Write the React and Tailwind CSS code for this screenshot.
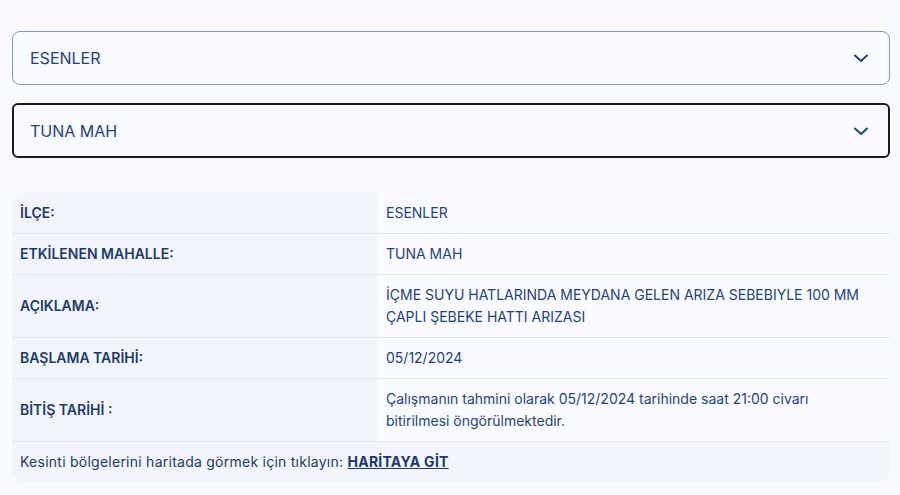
import { useState } from 'react'

const rows = [
  { label: 'İLÇE:', value: 'ESENLER' },
  { label: 'ETKİLENEN MAHALLE:', value: 'TUNA MAH' },
  { label: 'AÇIKLAMA:', value: 'İÇME SUYU HATLARINDA MEYDANA GELEN ARIZA SEBEBIYLE 100 MM ÇAPLI ŞEBEKE HATTI ARIZASI' },
  { label: 'BAŞLAMA TARİHİ:', value: '05/12/2024' },
  { label: 'BİTİŞ TARİHİ :', value: 'Çalışmanın tahmini olarak 05/12/2024 tarihinde saat 21:00 civarı bitirilmesi öngörülmektedir.' },
]

function Chevron() {
  return (
    <svg className="w-4 h-4 text-[#1e4285]" fill="none" viewBox="0 0 16 16" stroke="currentColor" strokeWidth={2}>
      <path strokeLinecap="round" strokeLinejoin="round" d="M2 5.5L8 11l6-5.5" />
    </svg>
  )
}

function Select({ value, active }) {
  return (
    <button
      type="button"
      className={
        active
          ? 'w-full h-[55px] flex items-center justify-between pl-4 pr-[19px] bg-[#f9fbfe] border-2 border-[#1b1b1b] rounded-md text-left'
          : 'w-full h-[54px] flex items-center justify-between pl-[17px] pr-5 bg-[#f9fbfe] border border-[#7c9bcc] rounded-lg text-left'
      }
    >
      <span className="text-base text-[#1e4285]">{value}</span>
      <Chevron />
    </button>
  )
}

export default function App() {
  const [district] = useState('ESENLER')
  const [hood] = useState('TUNA MAH')

  return (
    <div className="min-h-[495px] bg-[#f8fafd] pt-[31px] pl-3 pr-[10px] font-['Inter',sans-serif]">
      <div className="flex flex-col gap-[18px]">
        <Select value={district} />
        <Select value={hood} active />
      </div>

      <div className="mt-[35px] rounded-xl overflow-hidden bg-[#f2f5fb] text-sm leading-[22px] text-[#1c3b6b]">
        {rows.map((r) => (
          <div key={r.label} className="grid grid-cols-[365px_1fr] border-b border-[#e3e7ee]">
            <div className="flex items-center px-2 py-[9px] font-semibold">{r.label}</div>
            <div className="pl-[9px] pr-[22px] py-[9px] bg-[#fafbfe] text-[#1e4285]">{r.value}</div>
          </div>
        ))}
        <div className="px-2 py-[9px] tracking-[0.25px]">
          Kesinti bölgelerini haritada görmek için tıklayın:{' '}
          <a href="#" className="font-bold underline">HARİTAYA GİT</a>
        </div>
      </div>
    </div>
  )
}
